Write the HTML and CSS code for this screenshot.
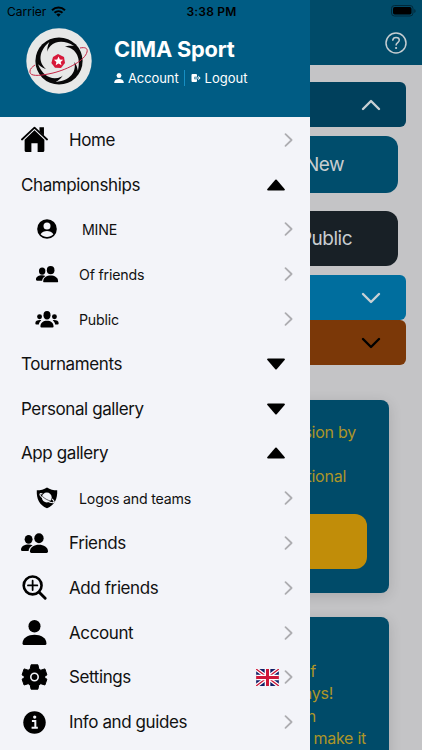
FILE: index.html
```html
<!DOCTYPE html>
<html lang="en">
<head>
  <meta charset="UTF-8">
  <meta name="viewport" content="width=device-width, initial-scale=1.0">
  <title>CIMA Sport</title>
  <link rel="stylesheet" href="styles.css">
</head>
<body>
  <svg class="sprite" aria-hidden="true">
    <symbol id="i-next" viewBox="0 0 10 16"><path d="M1.500 2.200 7.600 8l-6.100 5.800" fill="none" stroke="#adadb1" stroke-width="1.800" stroke-linecap="round" stroke-linejoin="round"/></symbol>
    <symbol id="i-up" viewBox="0 0 18 12"><path d="M8.300.8q.7-.7 1.400 0l7.900 9.200q.9 1.500-.8 1.500H1.200q-1.700 0-.8-1.500z"/></symbol>
    <symbol id="i-down" viewBox="0 0 18 12"><path d="M8.300 11.200q.7.7 1.400 0L17.600 2q.9-1.500-.8-1.500H1.200Q-.5.5.4 2z"/></symbol>
    <symbol id="i-chevron" viewBox="0 0 20 12"><path d="M2 2l8 8 8-8" fill="none" stroke="currentColor" stroke-width="2.400" stroke-linecap="round" stroke-linejoin="round"/></symbol>
    <symbol id="i-person" viewBox="0 0 24 24"><ellipse cx="12" cy="6" rx="5.800" ry="6"/><path d="M.5 22.500C.5 17 6 14.200 12 14.200S23.500 17 23.500 22.500q0 1.500-1.500 1.500H2q-1.500 0-1.500-1.500z"/></symbol>
    <symbol id="i-people" viewBox="0 0 26 20"><ellipse cx="7.300" cy="6" rx="3.800" ry="4.300"/><path d="M0 16c0-3.400 3.500-5 7.300-5 1.500 0 2.800.3 3.900.8C8.700 13.200 7.500 15 7.300 17.300H1.200Q0 17.300 0 16z"/><ellipse cx="17.300" cy="4.900" rx="4.500" ry="4.800"/><path d="M8.600 17.800c0-4.300 4.200-6.500 8.700-6.500s8.700 2.200 8.700 6.500q0 1.400-1.400 1.400H10q-1.400 0-1.400-1.400z"/></symbol>
    <symbol id="i-group" viewBox="0 0 22 16"><ellipse cx="11" cy="4" rx="3.300" ry="3.900"/><circle cx="4" cy="5.400" r="2.300"/><circle cx="18" cy="5.400" r="2.300"/><path d="M4.800 14.500c0-3.600 2.800-5.400 6.200-5.400s6.200 1.800 6.200 5.400q0 1-1 1H5.800q-1 0-1-1zM0 11.500c0-2.300 2-3.100 5.600-2.900-1.300 1.100-2 2.300-2.300 4H1Q0 12.600 0 11.500zm22 0c0-2.300-2-3.100-5.600-2.900 1.300 1.100 2 2.300 2.300 4H21q1 0 1-1.100z"/></symbol>
  </svg>

  <div class="screen">
    <main class="page">
      <header class="page-header">
        <svg class="help" viewBox="0 0 22 22"><circle cx="11" cy="11" r="10" fill="none" stroke="currentColor" stroke-width="1.500"/><path d="M7.800 8.200C8 6.300 9.200 5.400 11 5.400c2 0 3.300 1.100 3.300 2.700 0 2.500-3.200 2.400-3.200 5" fill="none" stroke="currentColor" stroke-width="1.500" stroke-linecap="round"/><circle cx="11.100" cy="16" r="1.100" fill="currentColor"/></svg>
      </header>
      <div class="accordion">
        <div class="bar bar-navy"><svg class="chev chev-open"><use href="#i-chevron"/></svg></div>
        <div class="action action-new">New</div>
        <div class="action action-public">Public</div>
        <div class="bar bar-blue"><svg class="chev"><use href="#i-chevron"/></svg></div>
        <div class="bar bar-brown"><svg class="chev"><use href="#i-chevron"/></svg></div>
      </div>
      <section class="card">
        <p class="card-line wide-line">sion by</p>
        <p class="card-line short-line">tional</p>
        <div class="card-button"></div>
      </section>
      <section class="card card-last">
        <p class="line-f">f</p>
        <p class="line-ays">ays!</p>
        <p class="line-n">n</p>
        <p class="line-make">make it</p>
      </section>
    </main>

    <aside class="drawer">
      <header class="profile">
        <svg class="logo" viewBox="0 0 66 66">
          <circle cx="33" cy="33" r="32.700" fill="#e7e8e7"/>
          <circle cx="33" cy="33" r="23.600" fill="#080808"/>
          <circle cx="33" cy="33" r="14.500" fill="#e0e9e9"/>
          <g fill="#e7e8e7">
            <path id="blade" d="M20 29C21 15 34 9 48 18c-7-1-11 1-13 5-3 1-6 3-8 7z"/>
            <use href="#blade" transform="rotate(72 33 33)"/>
            <use href="#blade" transform="rotate(144 33 33)"/>
            <use href="#blade" transform="rotate(216 33 33)"/>
            <use href="#blade" transform="rotate(288 33 33)"/>
          </g>
          <path d="M54 20c5-1 8 0 7 4C59 32 43 41 27 45 14 48 3 49 4 43c0-2 2-4 5-6" fill="none" stroke="#c62444" stroke-width="1"/>
          <path d="M32 26l6 3 1 6-4 5-6-.3-3.600-4.700L27 29z" fill="#d71939"/>
          <path d="M32.500 28.500l1.400 3 3.300.3-2.500 2.200.8 3.200-3-1.600-2.800 1.700.7-3.300-2.500-2.200 3.300-.4z" fill="#fff"/>
        </svg>
        <div class="profile-info">
          <h1>CIMA Sport</h1>
          <div class="profile-links">
            <svg class="mini-person"><use href="#i-person"/></svg>
            <span class="link-account">Account</span>
            <svg class="mini-exit" viewBox="0 0 10 10"><path d="M1.500 1H5q1 0 1 1v1.700H3.400v2.600H6V8q0 1-1 1H1.500Q.5 9 .5 8V2q0-1 1-1z" fill="#fff"/><path d="M4 5h5M7.200 3.100 9.200 5 7.200 6.900" fill="none" stroke="#fff" stroke-width="1"/></svg>
            <span>Logout</span>
          </div>
        </div>
      </header>

      <nav class="menu">
        <div class="item">
          <svg class="icon" viewBox="0 0 26 26"><path d="M.9 13 13 1.500 25.100 13" fill="none" stroke="#000" stroke-width="1.700" stroke-linecap="round" stroke-linejoin="round"/><path d="M17.800 1.200h4.300v8l-4.300-4zM13 4.200l9.500 9v10.300q0 1.500-1.500 1.500h-5v-8.500h-6V25H5q-1.500 0-1.500-1.500V13.200z"/></svg>
          <span>Home</span><svg class="next"><use href="#i-next"/></svg>
        </div>
        <div class="item group"><span>Championships</span><svg class="toggle"><use href="#i-up"/></svg></div>
        <div class="item sub">
          <svg class="icon" viewBox="0 0 24 24"><circle cx="12" cy="12" r="9.800"/><circle cx="12" cy="9" r="3.500" fill="#f3f4f9"/><path d="M5.600 17.300C7 15 9.400 14 12 14s5 1 6.400 3.300c-3.600 3.600-9.200 3.600-12.800 0z" fill="#f3f4f9"/></svg>
          <span class="mine">MINE</span><svg class="next"><use href="#i-next"/></svg>
        </div>
        <div class="item sub"><svg class="icon small-people"><use href="#i-people"/></svg><span>Of friends</span><svg class="next"><use href="#i-next"/></svg></div>
        <div class="item sub"><svg class="icon small-people"><use href="#i-group"/></svg><span>Public</span><svg class="next"><use href="#i-next"/></svg></div>
        <div class="item group"><span class="tournaments">Tournaments</span><svg class="toggle"><use href="#i-down"/></svg></div>
        <div class="item group"><span>Personal gallery</span><svg class="toggle"><use href="#i-down"/></svg></div>
        <div class="item group"><span>App gallery</span><svg class="toggle"><use href="#i-up"/></svg></div>
        <div class="item sub">
          <svg class="icon" viewBox="0 0 24 24"><path d="M12 1.500c3 2 6.500 2.800 10.200 2.800.4 8.800-2.500 14.700-10.200 18C4.300 19 1.400 13.100 1.800 4.300 5.500 4.300 9 3.500 12 1.500z"/><circle cx="11.800" cy="11.500" r="4.900" fill="#f3f4f9"/><path d="M7.500 8C4.500 7 4.200 8.500 6 10.500c3 3.500 9 6.500 12 6.200 1.800-.2 1.300-1.700-.8-3.900" fill="none" stroke="#f3f4f9" stroke-width="1.100"/><path d="M7.200 10.200c2.500 2.500 5.500 4 8.300 4.800" fill="none" stroke="#000" stroke-width=".6"/></svg>
          <span>Logos and teams</span><svg class="next"><use href="#i-next"/></svg>
        </div>
        <div class="item"><svg class="icon people"><use href="#i-people"/></svg><span>Friends</span><svg class="next"><use href="#i-next"/></svg></div>
        <div class="item">
          <svg class="icon" viewBox="0 0 26 26"><g fill="none" stroke="#000" stroke-linecap="round"><circle cx="11.200" cy="11" r="8.600" stroke-width="2.500"/><path d="M17.500 17.500 23.300 23.300" stroke-width="2.800"/><path d="M6.700 11h9M11.200 6.500v9" stroke-width="1.700"/></g></svg>
          <span>Add friends</span><svg class="next"><use href="#i-next"/></svg>
        </div>
        <div class="item"><svg class="icon account"><use href="#i-person"/></svg><span>Account</span><svg class="next"><use href="#i-next"/></svg></div>
        <div class="item">
          <svg class="icon gear" viewBox="0 0 26 26"><path d="M9.600.8h6.800l.9 4.200 2 1.200 4.100-1.300 2 6-3.100 2.100 3.100 2.200-2 5.800-4.100-1.300-2 1.200-.9 4.300H9.600L8.700 21l-2-1.300L2.600 21l-2-5.800L3.700 13 .6 10.900l2-6 4.100 1.300 2-1.200z" stroke="#000" stroke-width="1" stroke-linejoin="round"/><circle cx="13" cy="13" r="3.700" fill="none" stroke="#f3f4f9" stroke-width="1.600"/></svg>
          <span>Settings</span>
          <svg class="flag" viewBox="0 0 24 18"><path fill="#101d66" d="M0 0h24v18H0z"/><path d="M0 0l24 18M24 0 0 18" stroke="#fff" stroke-width="4"/><path d="M0 0l24 18M24 0 0 18" stroke="#ce1738" stroke-width="1.300"/><path d="M12 0v18M0 9h24" stroke="#fff" stroke-width="6"/><path d="M12 0v18M0 9h24" stroke="#ce1738" stroke-width="3.200"/></svg>
          <svg class="next"><use href="#i-next"/></svg>
        </div>
        <div class="item">
          <svg class="icon" viewBox="0 0 26 26"><circle cx="13" cy="13" r="10.800"/><circle cx="13.200" cy="7.800" r="1.600" fill="#f3f4f9"/><path d="M10.500 11.500h3.300v6.300M10.200 18h6" fill="none" stroke="#f3f4f9" stroke-width="1.900"/></svg>
          <span>Info and guides</span><svg class="next"><use href="#i-next"/></svg>
        </div>
      </nav>
    </aside>

    <div class="status-bar">
      <span class="carrier">Carrier</span>
      <svg class="wifi" viewBox="0 0 15 11"><g fill="none" stroke="#000" stroke-width="2"><path d="M1 4.200C4.700.6 10.300.6 14 4.200"/><path d="M3.500 6.800c2.300-2.200 5.700-2.200 8 0"/></g><path d="M5.300 8.500q2.200-1.800 4.400 0L7.500 10.800z"/></svg>
      <span class="clock">3:38 PM</span>
      <svg class="battery" viewBox="0 0 25 12"><rect x=".5" y=".5" width="21.500" height="10.500" rx="3" fill="none" stroke="#00293a"/><rect x="2" y="2" width="18.500" height="7.500" rx="1.700"/><path d="M23.300 4v4q1.300-.6 1.300-2t-1.300-2z" fill="#00293a"/></svg>
    </div>
  </div>
</body>
</html>
```
FILE: styles.css
```css
* {
  margin: 0;
  padding: 0;
  box-sizing: border-box;
}

body {
  font-family: Inter, 'Liberation Sans', sans-serif;
  background: #c4c4c6;
  color: #111;
}

.sprite {
  display: none;
}

.screen {
  position: relative;
  width: 422px;
  height: 750px;
  overflow: hidden;
}

/* Status bar */
.status-bar {
  position: absolute;
  top: 0;
  left: 0;
  width: 100%;
  height: 22px;
  padding: 0 6px 0 7px;
  display: grid;
  grid-template-columns: 44px 1fr auto 1fr 44px;
  align-items: center;
  font-size: 12px;
  color: #000;
}

.carrier {
  font-size: 12px;
}

.wifi {
  width: 15px;
  height: 11px;
}

.clock {
  font-weight: 600;
  letter-spacing: 0.2px;
}

.battery {
  width: 25px;
  height: 12px;
  grid-column: 5;
  justify-self: end;
}

/* Page behind the menu */
.page {
  height: 100%;
}

.page-header {
  height: 65px;
  padding: 32px 15px 0 0;
  display: flex;
  justify-content: flex-end;
  background: #004b69;
}

.help {
  width: 22px;
  height: 22px;
  color: #c5cdd1;
}

.accordion {
  width: 405.500px;
  padding-top: 17px;
}

.bar {
  height: 45px;
  padding-right: 24.500px;
  border-radius: 6px;
  display: flex;
  align-items: center;
  justify-content: flex-end;
  color: #c8d0d4;
}

.bar-navy {
  background: #00405c;
}

.bar-blue {
  background: #006e9e;
}

.bar-brown {
  background: #7b3808;
  color: #000;
}

.chev {
  width: 20px;
  height: 12px;
}

.chev-open {
  transform: rotate(180deg);
}

.action {
  width: 398px;
  height: 57px;
  margin-top: 9px;
  border-radius: 12px;
  font-size: 19px;
  line-height: 57px;
  text-align: right;
  letter-spacing: -0.5px;
  color: #c8cdd0;
}

.action-new {
  padding-right: 54px;
  background: #004d6c;
}

.action-public {
  height: 55px;
  margin: 18px 0 9px;
  padding-right: 46px;
  line-height: 55px;
  background: #182026;
}

.card {
  width: 389px;
  height: 193px;
  margin-top: 35px;
  padding: 21px 22px 0 0;
  border-radius: 8px;
  background: #004b69;
  box-shadow: 0 3px 14px rgba(0, 0, 0, 0.14);
  text-align: right;
  font-size: 16px;
  line-height: 22.400px;
  letter-spacing: -0.25px;
  color: #ad9528;
}

.wide-line {
  padding-right: 11px;
}

.short-line {
  margin-top: 22px;
  padding-right: 21px;
}

.card-button {
  height: 55px;
  margin-top: 26px;
  border-radius: 12px;
  background: #c18d09;
}

.card-last {
  margin-top: 24px;
  padding-top: 43px;
}

.line-f {
  padding-right: 51px;
}

.line-ays {
  padding-right: 34px;
}

.line-n {
  padding-right: 51px;
}

.line-make {
  padding-right: 1px;
}

/* Side menu */
.drawer {
  position: absolute;
  top: 0;
  left: 0;
  width: 309.500px;
  height: 100%;
  background: #f3f4f9;
}

.profile {
  height: 117px;
  padding: 28px 0 0 26px;
  display: flex;
  background: #005c84;
  color: #fff;
}

.logo {
  width: 66px;
  height: 66px;
}

.profile-info {
  margin-left: 22px;
}

h1 {
  margin-top: 8px;
  font-size: 21.800px;
  font-weight: 700;
  line-height: 27px;
  letter-spacing: -0.2px;
}

.profile-links {
  height: 16px;
  margin-top: 7px;
  display: flex;
  align-items: center;
  font-size: 13px;
}

.mini-person {
  width: 10px;
  height: 10px;
  margin-right: 4px;
  fill: #fff;
}

.link-account {
  letter-spacing: -0.1px;
  padding-right: 5px;
  margin-right: 6px;
  border-right: 1px solid #168fc3;
}

.mini-exit {
  width: 10px;
  height: 10px;
  margin-right: 4px;
}

.menu {
  padding-top: 0.500px;
}

.item {
  height: 44.800px;
  padding: 0 15.500px 0 21px;
  display: flex;
  align-items: center;
  font-size: 17px;
  letter-spacing: -0.4px;
}

.icon {
  width: 27px;
  height: 27px;
  margin-right: 21px;
  flex-shrink: 0;
}

.people {
  height: 21px;
}

.account {
  height: 25px;
}

.gear {
  height: 26px;
}

.item span {
  flex: 1;
  white-space: nowrap;
}

.group {
  padding-right: 24.500px;
}

.sub {
  padding-left: 35px;
  font-size: 14.200px;
  letter-spacing: -0.2px;
}

.sub .icon {
  width: 24px;
  height: 24px;
  margin-right: 20px;
}

.sub .small-people {
  height: 17px;
}

.item .mine {
  padding-left: 3px;
}

.next {
  width: 10px;
  height: 16px;
}

.toggle {
  width: 18px;
  height: 12px;
}

.flag {
  width: 23px;
  height: 17px;
  margin-right: 5px;
}
```
